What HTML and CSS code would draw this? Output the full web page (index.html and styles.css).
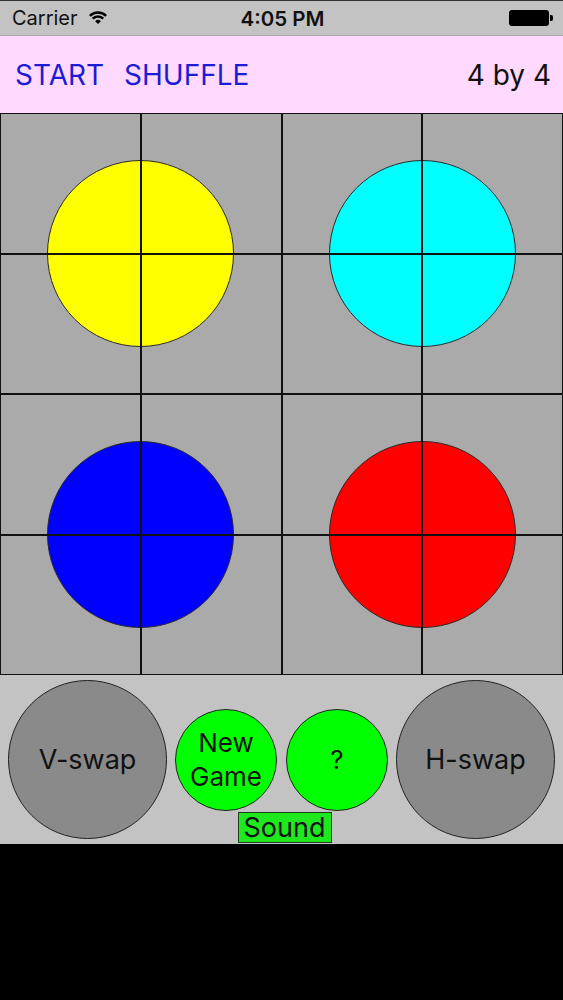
FILE: index.html
```html
<!DOCTYPE html>
<html lang="en">
<head>
<meta charset="utf-8">
<title>Color Swap</title>
<link rel="stylesheet" href="styles.css">
</head>
<body>
<div class="screen">
  <div class="statusbar">
    <div class="sb-left">
      <span class="carrier">Carrier</span>
      <svg class="wifi" width="20" height="15" viewBox="0 0 20 15" aria-hidden="true">
        <path d="M1.87 5.87 A11.5 11.5 0 0 1 18.13 5.87" fill="none" stroke="#000" stroke-width="2.4"/>
        <path d="M4.7 8.7 A7.5 7.5 0 0 1 15.3 8.7" fill="none" stroke="#000" stroke-width="2.4"/>
        <path d="M10 14 L7.17 11.17 A4 4 0 0 1 12.83 11.17 Z" fill="#000"/>
      </svg>
    </div>
    <span class="time">4:05 PM</span>
    <div class="sb-right">
      <span class="battery"><span class="battery-nub"></span></span>
    </div>
  </div>

  <header class="toolbar">
    <nav class="actions">
      <span class="action">START</span>
      <span class="action">SHUFFLE</span>
    </nav>
    <span class="size">4 by 4</span>
  </header>

  <main class="board">
    <div class="tile"><span class="disc yellow"></span></div>
    <div class="tile"><span class="disc cyan"></span></div>
    <div class="tile"><span class="disc blue"></span></div>
    <div class="tile"><span class="disc red"></span></div>
  </main>

  <footer class="controls">
    <button class="round big">V-swap</button>
    <div class="middle">
      <div class="middle-row">
        <button class="round small">New<br>Game</button>
        <button class="round small">?</button>
      </div>
      <button class="sound">Sound</button>
    </div>
    <button class="round big">H-swap</button>
  </footer>
</div>
</body>
</html>
```

FILE: styles.css
```css
* { box-sizing: border-box; }

html, body {
  margin: 0;
  padding: 0;
  background: #000;
}

body {
  font-family: "Inter", "Roboto", "Liberation Sans", sans-serif;
  color: #111;
}

.screen {
  width: 563px;
}

/* status bar */
.statusbar {
  height: 36px;
  background: #c3c3c3;
  border-top: 1px solid #333;
  border-bottom: 1px solid #a8a8a8;
  display: grid;
  grid-template-columns: 1fr auto 1fr;
  align-items: center;
  padding: 0 10px 0 12px;
}

.sb-left {
  display: flex;
  align-items: center;
  gap: 10px;
}

.carrier {
  font-size: 20px;
  color: #111;
}

.wifi {
  display: block;
  margin-top: -2px;
}

.time {
  font-size: 20.5px;
  font-weight: 600;
  color: #111;
}

.sb-right {
  display: flex;
  justify-content: flex-end;
}

.battery {
  position: relative;
  display: block;
  width: 40px;
  height: 16px;
  background: #000;
  border-radius: 3px;
  margin-right: 4px;
}

.battery-nub {
  position: absolute;
  right: -4px;
  top: 5px;
  width: 3px;
  height: 6px;
  background: #000;
  border-radius: 0 2px 2px 0;
}

/* toolbar */
.toolbar {
  height: 77px;
  background: #ffd9ff;
  display: flex;
  align-items: center;
  justify-content: space-between;
  padding: 0 12px 0 15px;
}

.actions {
  display: flex;
  gap: 20px;
}

.action {
  font-size: 28px;
  color: #1c1cd4;
}

.size {
  font-size: 28px;
  color: #111;
}

/* board */
.board {
  display: grid;
  grid-template-columns: 1fr 1fr;
  grid-template-rows: 281px 281px;
  background: #aaaaaa;
}

.tile {
  position: relative;
  border: 1px solid #111;
  display: flex;
  align-items: center;
  justify-content: center;
  background: #aaaaaa;
}

.tile::before,
.tile::after {
  content: "";
  position: absolute;
  background: #111;
}

.tile::before {
  left: calc(50% - 1px);
  top: 0;
  bottom: 0;
  width: 2px;
}

.tile::after {
  top: calc(50% - 1px);
  left: 0;
  right: 0;
  height: 2px;
}

.disc {
  display: block;
  width: 187px;
  height: 187px;
  border-radius: 50%;
  border: 1.5px solid #2a2a2a;
}

.yellow { background: #ffff00; }
.cyan { background: #00ffff; }
.blue { background: #0000ff; }
.red { background: #ff0000; }

/* controls */
.controls {
  height: 169px;
  background: #c3c3c3;
  display: flex;
  align-items: center;
  justify-content: space-between;
  padding: 0 8px 0 8px;
}

.round {
  font-family: inherit;
  color: #111;
  border: 1.5px solid #222;
  border-radius: 50%;
  padding: 0;
  display: flex;
  align-items: center;
  justify-content: center;
  text-align: center;
}

.big {
  width: 159px;
  height: 159px;
  background: #8a8a8a;
  font-size: 27px;
}

.small {
  width: 102px;
  height: 102px;
  background: #00ff00;
  font-size: 26px;
  line-height: 34px;
}

.middle {
  align-self: stretch;
  display: flex;
  flex-direction: column;
  align-items: center;
  padding-top: 34px;
}

.middle-row {
  display: flex;
  gap: 9px;
}

.sound {
  font-family: inherit;
  margin: 1px 0 0 6px;
  width: 94px;
  height: 31px;
  padding: 0;
  background: #1ee81e;
  border: 1.5px solid #1b3b1b;
  color: #111;
  font-size: 27px;
  line-height: 28px;
}
```
